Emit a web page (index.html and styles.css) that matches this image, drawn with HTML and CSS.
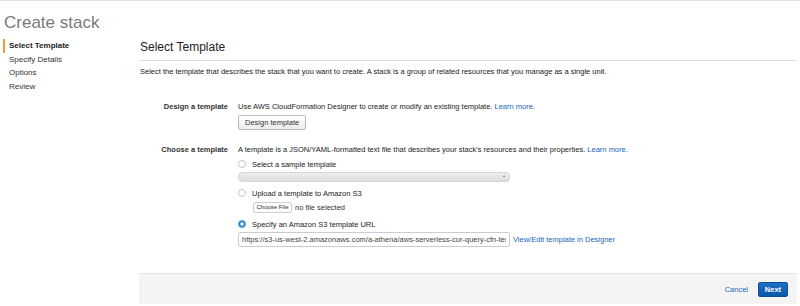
FILE: index.html
```html
<!DOCTYPE HTML>
<html lang="en">
  <head>
    <title>Create stack</title>
    <meta charset="utf-8">
    <link rel="stylesheet" href="styles.css">
  </head>
  <body>

  <div id="pageTitle">Create stack</div>

  <div id="wizard">
    <ul id="steps">
      <li class="step active">Select Template</li>
      <li class="step">Specify Details</li>
      <li class="step">Options</li>
      <li class="step">Review</li>
    </ul>

    <div id="panel">
      <h2 class="panel-title">Select Template</h2>
      <p class="intro">Select the template that describes the stack that you want to create. A stack is a group of related resources that you manage as a single unit.</p>

      <div class="field design">
        <div class="field-label">Design a template</div>
        <div class="field-body">
          <div class="help">Use AWS CloudFormation Designer to create or modify an existing template. <a href="#">Learn more.</a></div>
          <button class="btn">Design template</button>
        </div>
      </div>

      <div class="field choose">
        <div class="field-label">Choose a template</div>
        <div class="field-body">
          <div class="help">A template is a JSON/YAML-formatted text file that describes your stack's resources and their properties. <a href="#">Learn more.</a></div>
          <label class="option"><span class="radio"></span>Select a sample template</label>
          <div class="select"><span class="arrows"></span></div>
          <label class="option upload"><span class="radio"></span>Upload a template to Amazon S3</label>
          <div class="file"><span class="file-btn">Choose File</span>no file selected</div>
          <label class="option specify"><span class="radio checked"></span>Specify an Amazon S3 template URL</label>
          <div class="url-row">
            <input class="url" type="text" readonly value="https://s3-us-west-2.amazonaws.com/a-athena/aws-serverless-cur-query-cfn-template.yaml">
            <a href="#">View/Edit template in Designer</a>
          </div>
        </div>
      </div>

      <div id="footer">
        <a href="#" class="cancel">Cancel</a>
        <button class="btn primary">Next</button>
      </div>
    </div>
  </div>

  </body>
</html>
```

FILE: styles.css
```css
html {
  height: 100%;
}
body {
  margin: 0;
  padding: 0;
  background: #ffffff;
  color: #222;
  font-family: "Liberation Sans", Arial, sans-serif;
  font-size: 7.5px;
  border-top: 1px solid #e3e3e3;
}

a {
  color: #1a66c0;
  text-decoration: none;
}

#pageTitle {
  font-size: 17px;
  color: #7b7b7b;
  padding: 12px 0 0 4px;
  height: 26px;
}

#wizard {
  display: flex;
}

#steps {
  list-style: none;
  margin: 0;
  padding: 0;
  width: 139px;
  flex: none;
}

.step {
  font-size: 8px;
  line-height: 13.5px;
  padding-left: 9px;
  color: #333;
}

.step.active {
  font-weight: bold;
  border-left: 2px solid #f59b2b;
  margin-left: 3px;
  padding-left: 4px;
  color: #222;
}

#panel {
  flex: 1;
  margin-right: 3px;
}

.panel-title {
  font-size: 12px;
  font-weight: normal;
  margin: 0;
  padding: 1px 0 6px 1px;
  border-bottom: 1px solid #dedede;
  color: #222;
}

.intro {
  margin: 6px 0 0 1px;
  line-height: 10px;
}

.field {
  display: flex;
}

.field.design {
  margin-top: 25px;
}

.field.choose {
  margin-top: 15px;
}

.field-label {
  width: 89px;
  text-align: right;
  font-weight: bold;
  padding-right: 10px;
  line-height: 10px;
  color: #333;
}

.help {
  line-height: 10px;
}

.btn {
  font-family: "Liberation Sans", Arial, sans-serif;
  font-size: 7.5px;
  color: #333;
  background: linear-gradient(#ffffff, #ececec);
  border: 1px solid #bdbdbd;
  border-radius: 2px;
  height: 15px;
  padding: 0 6px;
  margin-top: 3px;
}

.option {
  display: flex;
  align-items: center;
  height: 10px;
  margin-top: 4px;
}

.option.upload {
  margin-top: 6px;
}

.option.specify {
  margin-top: 6px;
}

.radio {
  width: 6px;
  height: 6px;
  border: 1px solid #c4c4c4;
  border-radius: 50%;
  margin-right: 6px;
  background: #fff;
}

.radio.checked {
  border-color: #3c8ddc;
  background: radial-gradient(circle, #ffffff 0 1.3px, #3c8ddc 1.8px);
}

.select {
  width: 272px;
  height: 10px;
  margin: 3px 0 2px 0;
  border: 1px solid #d6d6d6;
  border-radius: 4px;
  background: linear-gradient(#eeeeee, #dddddd);
  box-sizing: border-box;
  position: relative;
}

.arrows {
  position: absolute;
  right: 4px;
  top: 2px;
  width: 0;
  height: 0;
  border-left: 1.5px solid transparent;
  border-right: 1.5px solid transparent;
  border-bottom: 2px solid #777;
}

.file {
  display: flex;
  align-items: center;
  margin: 4px 0 0 15px;
  font-size: 7.5px;
  color: #333;
}

.file-btn {
  font-size: 6px;
  width: 37px;
  height: 9px;
  line-height: 9px;
  text-align: center;
  border: 1px solid #cfcfcf;
  border-radius: 2px;
  margin-right: 3px;
  background: #fbfbfb;
  color: #333;
}

.url-row {
  display: flex;
  align-items: center;
  margin-top: 3px;
}

.url {
  width: 272px;
  height: 15px;
  box-sizing: border-box;
  border: 1px solid #cccccc;
  border-radius: 2px;
  padding: 0 3px;
  font-family: "Liberation Sans", Arial, sans-serif;
  font-size: 7.5px;
  color: #444;
  margin: 0 3px 0 0;
  outline: none;
}

#footer {
  margin-top: 26px;
  height: 30px;
  background: #f4f4f4;
  border-top: 1px solid #e2e2e2;
  display: flex;
  align-items: center;
  justify-content: flex-end;
  padding-right: 9px;
}

.cancel {
  margin-right: 10px;
}

.btn.primary {
  margin: 0;
  color: #fff;
  font-weight: bold;
  background: linear-gradient(#1f6fc4, #0c58a8);
  border-color: #0b4f98;
  padding: 0;
  width: 30px;
  height: 15px;
}
```
